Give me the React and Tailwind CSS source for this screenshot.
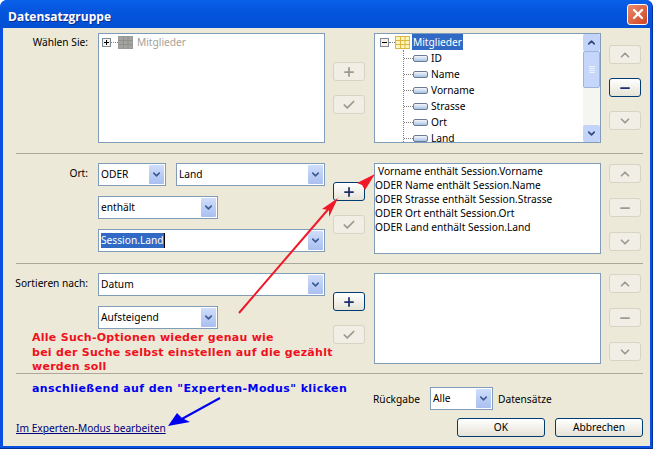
import { ChevronUp, ChevronDown, Plus, Minus, Check, X } from "lucide-react";

const field = "border border-[#7f9db9] bg-white";

const ToolButton = ({ icon: Icon, active, className = "" }) => (
  <button
    className={
      active
        ? `flex h-[19px] w-[32px] items-center justify-center rounded-[3px] border border-[#003c74] bg-gradient-to-b from-white to-[#e6e3d6] text-[#1a2f6b] ${className}`
        : `flex h-[19px] w-[32px] items-center justify-center rounded-[3px] border border-[#d8d4c4] bg-[#f1efe5] text-[#9a9a92] ${className}`
    }
  >
    <Icon size={14} strokeWidth={3} />
  </button>
);

const Select = ({ value, width, selected }) => (
  <div className={`flex h-[23px] items-center ${field} ${width}`}>
    <span
      className={
        selected
          ? "ml-[2px] border-r border-black bg-[#316ac5] leading-[15px] text-white"
          : "ml-[2px] leading-none"
      }
    >
      {value}
    </span>
    <span className="mr-[1px] ml-auto flex h-[19px] w-[15px] items-center justify-center rounded-[1px] bg-gradient-to-b from-[#d0ddfa] to-[#a9bff0] text-[#3d5a94]">
      <ChevronDown size={11} strokeWidth={3.5} />
    </span>
  </div>
);

const UpDown = ({ activeMinus, className = "" }) => (
  <div className={`flex w-[32px] flex-col ${activeMinus ? "gap-[14px]" : "gap-[15px]"} ${className}`}>
    <ToolButton icon={ChevronUp} />
    <ToolButton icon={Minus} active={activeMinus} />
    <ToolButton icon={ChevronDown} />
  </div>
);

const AddCheck = ({ active, className = "" }) => (
  <div className={`flex w-[32px] flex-col gap-[14px] ${className}`}>
    <ToolButton icon={Plus} active={active} />
    <ToolButton icon={Check} />
  </div>
);

const ColumnIcon = () => (
  <span className="block h-[7px] w-[15px] rounded-[2px] border border-[#6c7c94] bg-gradient-to-b from-[#f4f7fb] to-[#a9c3e6]" />
);

const Expander = ({ sign }) => (
  <span className="relative block h-[9px] w-[9px] border border-[#7f8a94] bg-[#f4f2ea]">
    <span className="absolute top-[3px] left-[1px] h-[1px] w-[5px] bg-black" />
    {sign === "plus" && <span className="absolute top-[1px] left-[3px] h-[5px] w-[1px] bg-black" />}
  </span>
);

const TableIcon = ({ disabled }) => (
  <svg width="15" height="13" viewBox="0 0 15 13" className="block">
    <rect x="0.5" y="0.5" width="14" height="12" fill={disabled ? "#a3a3a0" : "#fdf6b8"} stroke={disabled ? "#9a9a98" : "#d8b748"} />
    <path
      d="M0.5 4.5H14.5M0.5 8.5H14.5M5.5 0.5V12.5M10 0.5V12.5"
      stroke={disabled ? "#8f8f8c" : "#e0b53f"}
      fill="none"
    />
  </svg>
);

const columns = ["ID", "Name", "Vorname", "Strasse", "Ort", "Land"];
const conditions = [
  "ODER Name enthält Session.Name",
  "ODER Strasse enthält Session.Strasse",
  "ODER Ort enthält Session.Ort",
  "ODER Land enthält Session.Land",
];

const Scrollbar = () => (
  <div className="ml-auto flex w-[17px] shrink-0 flex-col bg-[#f6f6f0]">
    <span className="flex h-[17px] items-center justify-center rounded-[2px] bg-[#c3d3fa] text-[#2a4a80]">
      <ChevronUp size={11} strokeWidth={3.5} />
    </span>
    <span className="flex h-[37px] flex-col items-center justify-center gap-[1px] rounded-[2px] border border-[#9db4de] bg-[#c6d6fb]">
      <span className="h-[1px] w-[6px] bg-[#eef3fe]" />
      <span className="h-[1px] w-[6px] bg-[#eef3fe]" />
      <span className="h-[1px] w-[6px] bg-[#eef3fe]" />
      <span className="h-[1px] w-[6px] bg-[#eef3fe]" />
    </span>
    <span className="mt-auto flex h-[17px] items-center justify-center rounded-[2px] bg-[#c3d3fa] text-[#2a4a80]">
      <ChevronDown size={11} strokeWidth={3.5} />
    </span>
  </div>
);

const Section = ({ children, height }) => (
  <div className={`ml-[13px] mr-[7px] flex shrink-0 border-b border-[#aca899] ${height}`}>
    {children}
  </div>
);

const Label = ({ children, className = "" }) => (
  <div className={`flex w-[82px] shrink-0 justify-end pr-[10px] leading-none whitespace-nowrap ${className}`}>
    <span>{children}</span>
  </div>
);

const App = () => {
  return (
    <div className="relative flex h-[449px] w-[653px] flex-col overflow-hidden rounded-t-[7px] border-r border-b border-[#00309c] bg-[#0a4fe0] font-['Noto_Sans',sans-serif] text-[10.2px] text-black">
      {/* title bar */}
      <div className="flex h-[28px] shrink-0 items-center justify-between bg-gradient-to-b from-[#0a5fe8] via-[#0453dc] to-[#0350d2] pr-[4px] pl-[8px]">
        <span className="mt-[5px] font-['Open_Sans',sans-serif] text-[12px] leading-none font-bold text-white [text-shadow:1px_1px_0_#0a2d8a]">
          Datensatzgruppe
        </span>
        <span className="flex h-[21px] w-[21px] items-center justify-center rounded-[3px] border border-white bg-gradient-to-br from-[#e88a6c] to-[#d0401c] text-white">
          <X size={16} strokeWidth={3.5} />
        </span>
      </div>

      <div className="mr-[2px] mb-[2px] ml-[3px] flex flex-1 flex-col bg-[#ece9d8]">
        {/* Wählen Sie */}
        <Section height="h-[126px]">
          <Label className="mt-[9px]">Wählen Sie:</Label>
          <div className={`mt-[5px] h-[110px] w-[227px] pt-[1px] pl-[3px] ${field}`}>
            <div className="flex h-[15px] items-center text-[#a5a296]">
              <Expander sign="plus" />
              <span className="w-[7px] border-t border-dotted border-[#808080]" />
              <TableIcon disabled />
              <span className="ml-[4px] leading-none">Mitglieder</span>
            </div>
          </div>
          <AddCheck className="mt-[34px] ml-[8px]" />
          <div className={`mt-[5px] ml-[9px] flex h-[110px] w-[227px] overflow-hidden ${field}`}>
            <div className="relative flex-1 overflow-hidden pl-[5px]">
              <div className="flex h-[16px] items-center">
                <Expander />
                <span className="w-[6px] border-t border-dotted border-[#808080]" />
                <TableIcon />
                <span className="ml-[2px] bg-[#316ac5] px-[1px] leading-[16px] text-white">Mitglieder</span>
              </div>
              <div className="ml-[23px] border-l border-dotted border-[#808080]">
                {columns.map((name) => (
                  <div key={name} className="flex h-[16px] items-center">
                    <span className="w-[9px] border-t border-dotted border-[#808080]" />
                    <ColumnIcon />
                    <span className="ml-[3px] leading-none">{name}</span>
                  </div>
                ))}
              </div>
            </div>
            <Scrollbar />
          </div>
          <UpDown activeMinus className="mt-[17px] ml-[8px]" />
        </Section>

        {/* Ort */}
        <Section height="h-[110px]">
          <Label className="mt-[14px]">Ort:</Label>
          <div className="mt-[9px] flex w-[227px] flex-col gap-[10px]">
            <div className="flex gap-[10px]">
              <Select value="ODER" width="w-[68px]" />
              <Select value="Land" width="w-[149px]" />
            </div>
            <Select value="enthält" width="w-[120px]" />
            <Select value="Session.Land" width="w-[227px]" selected />
          </div>
          <AddCheck active className="mt-[28px] ml-[8px]" />
          <div className={`mt-[9px] ml-[9px] h-[91px] w-[227px] leading-[14px] ${field}`}>
            <div className="pl-[3px]">Vorname enthält Session.Vorname</div>
            {conditions.map((text) => (
              <div key={text}>{text}</div>
            ))}
          </div>
          <UpDown className="mt-[10px] ml-[8px]" />
        </Section>

        {/* Sortieren nach */}
        <Section height="h-[110px]">
          <Label className="mt-[14px]">Sortieren nach:</Label>
          <div className="mt-[9px] flex w-[227px] flex-col gap-[10px]">
            <Select value="Datum" width="w-[227px]" />
            <Select value="Aufsteigend" width="w-[120px]" />
          </div>
          <AddCheck active className="mt-[28px] ml-[8px]" />
          <div className={`mt-[9px] ml-[9px] h-[91px] w-[227px] ${field}`} />
          <UpDown className="mt-[10px] ml-[8px]" />
        </Section>

        {/* bottom */}
        <div className="flex min-h-0 flex-1 justify-between pr-[7px] pl-[13px]">
          <div className="flex flex-col justify-end pb-[11px]">
            <a className="leading-[14px] text-[#00007f] underline">Im Experten-Modus bearbeiten</a>
          </div>
          <div className="flex w-[270px] flex-col pt-[13px]">
            <div className="flex items-center">
              <span className="w-[57px] translate-y-[1px]">Rückgabe</span>
              <Select value="Alle" width="w-[63px]" />
              <span className="ml-[5px] translate-y-[1px]">Datensätze</span>
            </div>
            <div className="mt-[8px] flex justify-end gap-[10px]">
              <button className="h-[19px] w-[88px] rounded-[3px] border border-[#003c74] bg-gradient-to-b from-white to-[#e6e3d6] leading-none">OK</button>
              <button className="h-[19px] w-[88px] rounded-[3px] border border-[#003c74] bg-gradient-to-b from-white to-[#e6e3d6] leading-none">Abbrechen</button>
            </div>
          </div>
        </div>
      </div>

      {/* annotations pasted over the dialog */}
      <div className="absolute top-[331px] left-[32px] font-['DejaVu_Sans',sans-serif] text-[11px] leading-[14.5px] font-bold tracking-[0.27px] text-[#f01020]">
        Alle Such-Optionen wieder genau wie
        <br />
        bei der Suche selbst einstellen auf die gezählt
        <br />
        werden soll
      </div>
      <div className="absolute top-[382px] left-[32px] font-['DejaVu_Sans',sans-serif] text-[11px] leading-[14px] font-bold tracking-[0.4px] text-[#0000f0]">
        anschließend auf den "Experten-Modus" klicken
      </div>
      <svg width="653" height="449" viewBox="0 0 653 449" className="pointer-events-none absolute top-0 left-0">
        <path d="M239 313L331 206" stroke="#f01828" strokeWidth="2" fill="none" />
        <path d="M338 198L322 209L329 210L329 217Z" fill="#f01828" />
        <path d="M375 174L357 183L362 185L365 190Z" fill="#f01828" />
        <path d="M220 398L180 420" stroke="#0000f0" strokeWidth="2" fill="none" />
        <path d="M168 426L190 422L182 418L177 413Z" fill="#0000f0" />
      </svg>
    </div>
  );
};

export default App;
